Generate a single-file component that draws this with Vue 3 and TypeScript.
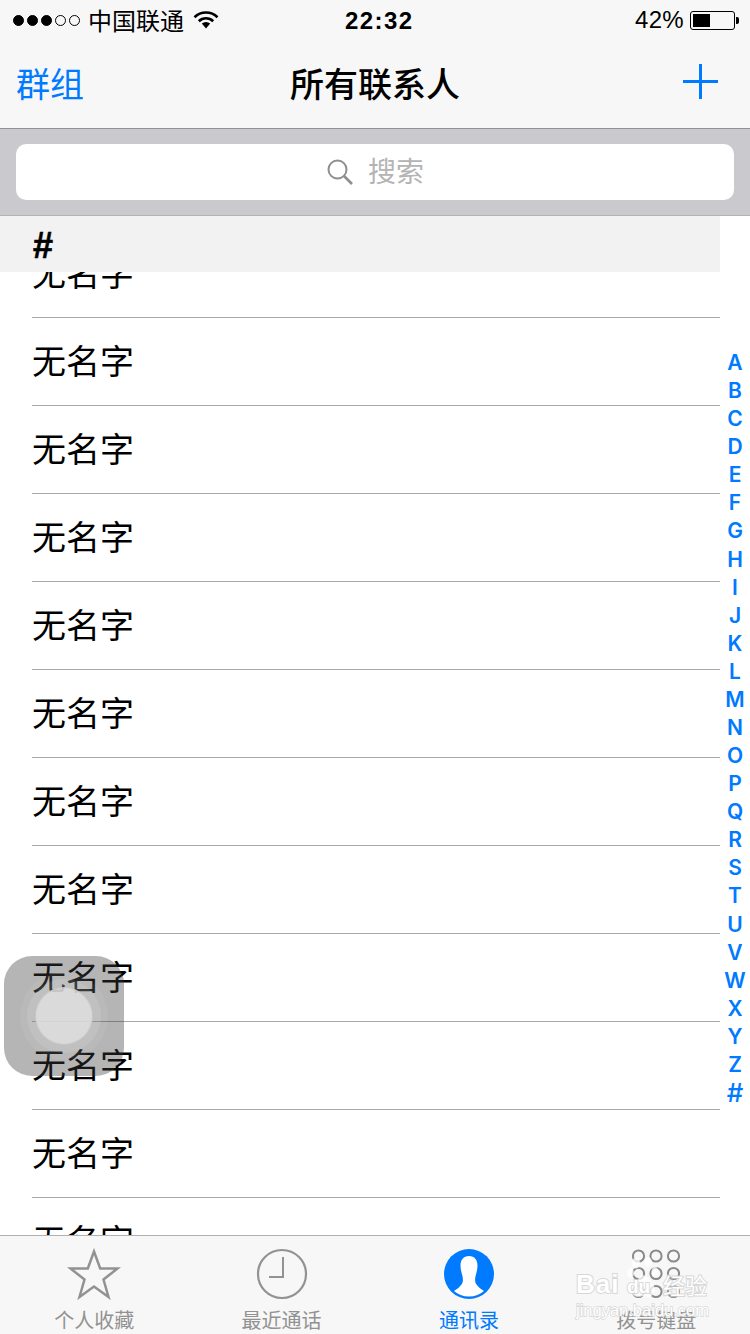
<template>
  <div class="phone">
    <header class="top-bar">
      <div class="status">
        <div class="status-left">
          <span class="signal">
            <i v-for="n in 5" :key="n" class="dot" :class="{ on: n <= 3 }"></i>
          </span>
          <span class="carrier">中国联通</span>
          <svg class="wifi" width="26" height="20" viewBox="0 0 26 20">
            <path d="M1.500 7.200a16.500 16.500 0 0 1 23 0" fill="none" stroke="#000" stroke-width="2.600" />
            <path d="M5.800 11.200a10.400 10.400 0 0 1 14.400 0" fill="none" stroke="#000" stroke-width="2.600" />
            <path d="M8.800 13.600a6.200 6.200 0 0 1 8.400 0L13 18.600z" fill="#000" />
          </svg>
        </div>
        <span class="time">22:32</span>
        <div class="status-right">
          <span class="percent">42%</span>
          <span class="battery"><i class="level"></i></span>
          <i class="nub"></i>
        </div>
      </div>
      <nav class="nav">
        <span class="nav-left">群组</span>
        <span class="nav-title">所有联系人</span>
        <svg class="plus" width="35" height="35" viewBox="0 0 35 35">
          <path d="M17.500 0v35M0 17.500h35" stroke="#007aff" stroke-width="3" />
        </svg>
      </nav>
    </header>

    <div class="search-wrap">
      <div class="search">
        <svg width="28" height="28" viewBox="0 0 28 28" fill="none" stroke="#8e8e93">
          <circle cx="11.500" cy="11.500" r="9" stroke-width="2" />
          <path d="M18 18l8 8" stroke-width="2.600" />
        </svg>
        <span>搜索</span>
      </div>
    </div>

    <main class="content">
      <div class="section-head">#</div>
      <ul class="rows">
        <li v-for="n in 12" :key="n" class="row"><span>无名字</span></li>
      </ul>
      <div class="index">
        <span v-for="letter in letters" :key="letter">{{ letter }}</span>
      </div>
      <div class="assistive">
        <i class="ring outer"><i class="ring middle"><i class="ring inner"></i></i></i>
      </div>
    </main>

    <footer class="tabs">
      <div class="tab">
        <svg width="54" height="52" viewBox="0 0 54 52">
          <path d="M27 3.500l6.200 17h17.300l-14 11 5 17.500L27 38.500 12.500 49l5-17.500-14-11h17.300z" fill="none" stroke="#929292" stroke-width="2.500" />
        </svg>
        <span>个人收藏</span>
      </div>
      <div class="tab">
        <svg width="52" height="52" viewBox="0 0 52 52" fill="none" stroke="#929292">
          <circle cx="26" cy="26" r="24" stroke-width="2.200" />
          <path d="M27 9v20H13" stroke-width="2" />
        </svg>
        <span>最近通话</span>
      </div>
      <div class="tab active">
        <svg width="52" height="52" viewBox="0 0 52 52">
          <circle cx="26" cy="26" r="25" fill="#007aff" />
          <path d="M26 8c5.500 0 8.500 4 8.500 9.500 0 4-1 7-1.800 10s-.9 6.500.5 8.500c1.800 3 4.800 5 7.800 7-3.800 3.500-9 5.500-15 5.500S14.800 46.500 11 43c3-2 6-4 7.800-7 1.400-2 1.300-5.500.5-8.500s-1.800-6-1.800-10C17.500 12 20.500 8 26 8z" fill="#fff" />
        </svg>
        <span>通讯录</span>
      </div>
      <div class="tab">
        <svg width="52" height="52" viewBox="0 0 52 52" fill="none" stroke="#8a8a8a" stroke-width="2">
          <template v-for="y in [8, 25.500, 43.500]" :key="y">
            <circle v-for="x in [8.500, 26, 43.500]" :key="x" :cx="x" :cy="y" r="5.600" />
          </template>
        </svg>
        <span>拨号键盘</span>
      </div>
      <div class="watermark">
        <svg class="paw" width="32" height="42" viewBox="0 0 32 42" fill="#fff" fill-opacity="0.75">
          <ellipse cx="9" cy="6" rx="4" ry="5.500" />
          <ellipse cx="21" cy="5" rx="4" ry="5" />
          <ellipse cx="3.500" cy="16" rx="3.500" ry="5" />
          <ellipse cx="28" cy="15" rx="3.500" ry="5" />
          <path d="M15 18c4 0 6 4 9 7s5 6 3 11-8 4-11 3c-3 1-9 2-11-3s1-8 4-11 3-7 6-7z" />
        </svg>
        <div class="mark-main">
          <span class="bai">Bai</span><span class="du">du</span><span class="jy">经验</span>
        </div>
        <div class="mark-sub">jingyan.baidu.com</div>
      </div>
    </footer>
  </div>
</template>

<script setup lang="ts">
const letters: string[] = 'ABCDEFGHIJKLMNOPQRSTUVWXYZ#'.split('');
</script>

<style>
html,
body {
  background: #fff;
}
</style>

<style scoped>
.phone {
  width: 750px;
  height: 1334px;
  display: flex;
  flex-direction: column;
  overflow: hidden;
  background: #fff;
  color: #000;
  font-family: "Liberation Sans", "Noto Sans CJK SC", sans-serif;
}

.top-bar {
  height: 129px;
  flex: none;
  background: #f7f7f7;
  border-bottom: 1px solid #929292;
  box-sizing: border-box;
}

.status {
  height: 40px;
  display: flex;
  align-items: center;
  justify-content: space-between;
  padding: 0 11px 0 13px;
  position: relative;
}

.status-left,
.status-right {
  display: flex;
  align-items: center;
}

.signal {
  display: flex;
  gap: 3px;
  margin-right: 8px;
}

.dot {
  width: 11px;
  height: 11px;
  border: 1px solid #000;
  border-radius: 50%;
  box-sizing: border-box;
}

.dot.on {
  background: #000;
}

.carrier {
  font-size: 24px;
  margin-right: 9px;
  margin-top: -2px;
}

.time {
  position: absolute;
  left: 345px;
  font-size: 24px;
  font-weight: 700;
  letter-spacing: 1.400px;
  margin-top: 1px;
}

.percent {
  font-size: 24px;
  letter-spacing: 0.300px;
  margin-right: 6px;
}

.battery {
  width: 45px;
  height: 19px;
  padding: 2px;
  border: 1px solid #000;
  border-radius: 3px;
  box-sizing: border-box;
  display: block;
}

.level {
  display: block;
  width: 17px;
  height: 100%;
  background: #000;
}

.nub {
  width: 3px;
  height: 7px;
  margin-left: 1px;
  background: #000;
  border-radius: 0 2px 2px 0;
}

.nav {
  height: 88px;
  display: flex;
  align-items: center;
  justify-content: space-between;
  padding: 0 32px 4px 16px;
  box-sizing: border-box;
  position: relative;
}

.nav-left {
  font-size: 34px;
  color: #007aff;
}

.nav-title {
  position: absolute;
  left: 290px;
  font-size: 34px;
  font-weight: 500;
}

.plus {
  margin-top: -1px;
}

.search-wrap {
  height: 87px;
  flex: none;
  padding: 15px 16px;
  box-sizing: border-box;
  background: #c9c9ce;
  border-bottom: 1px solid #b2b2b2;
}

.search {
  height: 56px;
  display: flex;
  align-items: center;
  justify-content: center;
  gap: 14px;
  background: #fff;
  border-radius: 10px;
  color: #b4b4b4;
  font-size: 28px;
}

.search span {
  margin-top: -4px;
}

.content {
  flex: 1;
  min-height: 0;
  position: relative;
  overflow: hidden;
}

.section-head {
  position: absolute;
  top: 0;
  left: 0;
  width: 720px;
  height: 56px;
  line-height: 59px;
  padding-left: 33px;
  box-sizing: border-box;
  background: #f2f2f2;
  font-size: 36px;
  font-weight: 700;
  -webkit-text-stroke: 0.6px #000;
  z-index: 1;
}

.rows {
  list-style: none;
  margin: 0;
  padding: 14px 0 0 32px;
  width: 720px;
  box-sizing: border-box;
}

.row {
  height: 88px;
  display: flex;
  align-items: center;
  padding-bottom: 4px;
  box-sizing: border-box;
  border-bottom: 1px solid #a8a8a8;
  font-size: 34px;
}

.index {
  position: absolute;
  top: 133px;
  right: 0;
  width: 30px;
  display: flex;
  flex-direction: column;
  align-items: center;
  color: #007aff;
  font-family: Inter, "Liberation Sans", sans-serif;
  font-size: 21px;
  font-weight: 600;
}

.index span {
  height: 28.080px;
  line-height: 28px;
}

.index span:last-child {
  font-size: 26px;
  font-weight: 500;
}

.assistive {
  position: absolute;
  top: 740px;
  left: 4px;
  width: 120px;
  height: 120px;
  display: flex;
  align-items: center;
  justify-content: center;
  border-radius: 28px;
  background: rgba(60, 60, 60, 0.38);
}

.ring {
  display: flex;
  align-items: center;
  justify-content: center;
  border-radius: 50%;
}

.outer {
  width: 88px;
  height: 88px;
  background: rgba(255, 255, 255, 0.06);
}

.middle {
  width: 74px;
  height: 74px;
  background: rgba(255, 255, 255, 0.1);
}

.inner {
  width: 58px;
  height: 58px;
  background: rgba(222, 222, 222, 0.85);
  border: 1px solid rgba(195, 195, 195, 0.8);
  box-sizing: border-box;
}

.tabs {
  height: 99px;
  flex: none;
  display: grid;
  grid-template-columns: repeat(4, 1fr);
  padding-left: 0.500px;
  position: relative;
  box-sizing: border-box;
  background: #f7f7f7;
  border-top: 1px solid #b0b0b0;
}

.tab {
  display: flex;
  flex-direction: column;
  align-items: center;
  padding-top: 12px;
  color: #929292;
  font-size: 20px;
  line-height: 28px;
}

.tab svg {
  margin-bottom: 7px;
  flex: none;
}

.tab.active {
  color: #007aff;
}

.watermark {
  position: absolute;
  left: 576px;
  top: 35px;
  width: 136px;
  color: #fff;
  -webkit-text-stroke: 2px rgba(205, 205, 205, 0.75);
  paint-order: stroke fill;
  white-space: nowrap;
}

.paw {
  position: absolute;
  left: 51px;
  top: -14px;
}

.mark-main {
  display: flex;
  align-items: center;
  height: 26px;
  font-weight: 700;
  position: relative;
}

.bai {
  font-size: 26px;
  letter-spacing: 1px;
  width: 51px;
}

.du {
  font-size: 19px;
  width: 36px;
  padding-top: 6px;
}

.jy {
  font-size: 22px;
  font-weight: 400;
}

.mark-sub {
  margin-top: 3px;
  font-size: 16.500px;
  line-height: 20px;
  -webkit-text-stroke-width: 1.500px;
}
</style>
